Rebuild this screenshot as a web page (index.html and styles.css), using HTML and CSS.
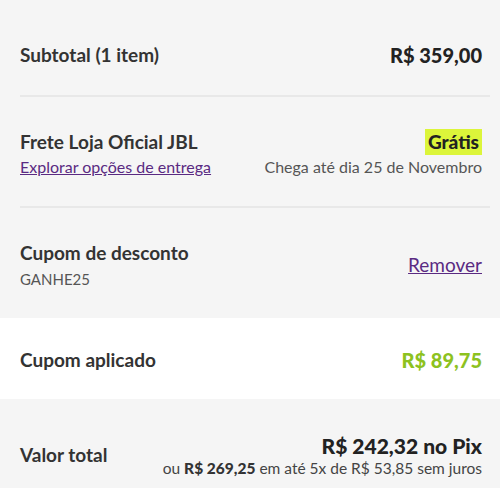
FILE: index.html
```html
<!DOCTYPE html>
<html lang="pt-BR">
<head>
    <meta charset="UTF-8">
    <meta name="viewport" content="width=device-width, initial-scale=1.0">
    <title>Resumo do pedido</title>
    <link rel="stylesheet" href="styles.css">
</head>
<body>
    <div class="summary">
        <div class="summary-row row-subtotal">
            <span class="label">Subtotal (1 item)</span>
            <span class="price">R$ 359,00</span>
        </div>

        <div class="summary-row row-shipping">
            <div class="col">
                <span class="label">Frete Loja Oficial JBL</span>
                <a href="#" class="link small-link">Explorar opções de entrega</a>
            </div>
            <div class="col col-right">
                <span class="badge-free">Grátis</span>
                <span class="muted">Chega até dia 25 de Novembro</span>
            </div>
        </div>

        <div class="summary-row row-coupon">
            <div class="col">
                <span class="label">Cupom de desconto</span>
                <span class="muted code">GANHE25</span>
            </div>
            <a href="#" class="link remove-link">Remover</a>
        </div>
    </div>

    <div class="applied">
        <span class="label">Cupom aplicado</span>
        <span class="price price-green">R$ 89,75</span>
    </div>

    <div class="total">
        <span class="label">Valor total</span>
        <div class="col col-right">
            <span class="price price-big">R$ 242,32 no Pix</span>
            <span class="installments">ou <strong>R$ 269,25</strong> em até 5x de R$ 53,85 sem juros</span>
        </div>
    </div>
</body>
</html>
```

FILE: styles.css
```css
* {
    margin: 0;
    padding: 0;
    box-sizing: border-box;
}

body {
    font-family: Lato, 'Open Sans', sans-serif;
    background: #f5f5f5;
    color: #333;
    width: 500px;
}

.summary {
    padding: 0 10px 0 20px;
}

.summary-row {
    display: flex;
    justify-content: space-between;
    align-items: center;
    border-bottom: 2px solid #e8e8e8;
    padding-right: 8px;
}

.row-subtotal {
    height: 97px;
    padding-top: 14px;
}

.row-shipping {
    height: 111px;
    padding-top: 2px;
}

.row-coupon {
    height: 110px;
    border-bottom: none;
    padding-top: 2px;
}

.col {
    display: flex;
    flex-direction: column;
}

.col-right {
    align-items: flex-end;
}

.label {
    font-size: 19px;
    font-weight: 700;
    color: #333;
}

.price {
    font-size: 20px;
    font-weight: 900;
    color: #222;
}

.link {
    color: #5a2a82;
    text-decoration: underline;
}

.small-link {
    font-size: 16px;
    margin-top: 4px;
}

.remove-link {
    font-size: 19px;
    margin-top: 0;
}

.badge-free {
    background: #dcf53a;
    color: #222;
    font-size: 19px;
    font-weight: 900;
    padding: 1px 3px;
    line-height: 24px;
}

.muted {
    font-size: 16px;
    color: #555;
    margin-top: 2px;
}

.code {
    font-size: 15px;
    margin-top: 6px;
}

.applied {
    background: #fff;
    display: flex;
    justify-content: space-between;
    align-items: center;
    height: 81px;
    padding: 2px 18px 0 20px;
}

.price-green {
    color: #8dc21f;
}

.total {
    display: flex;
    justify-content: space-between;
    align-items: center;
    height: 90px;
    padding: 22px 18px 0 20px;
}

.total .label {
    margin-top: -2px;
}

.price-big {
    font-size: 21px;
}

.installments {
    font-size: 15.5px;
    color: #444;
    margin-top: 1px;
}

.installments strong {
    font-weight: 900;
    color: #333;
}
```
